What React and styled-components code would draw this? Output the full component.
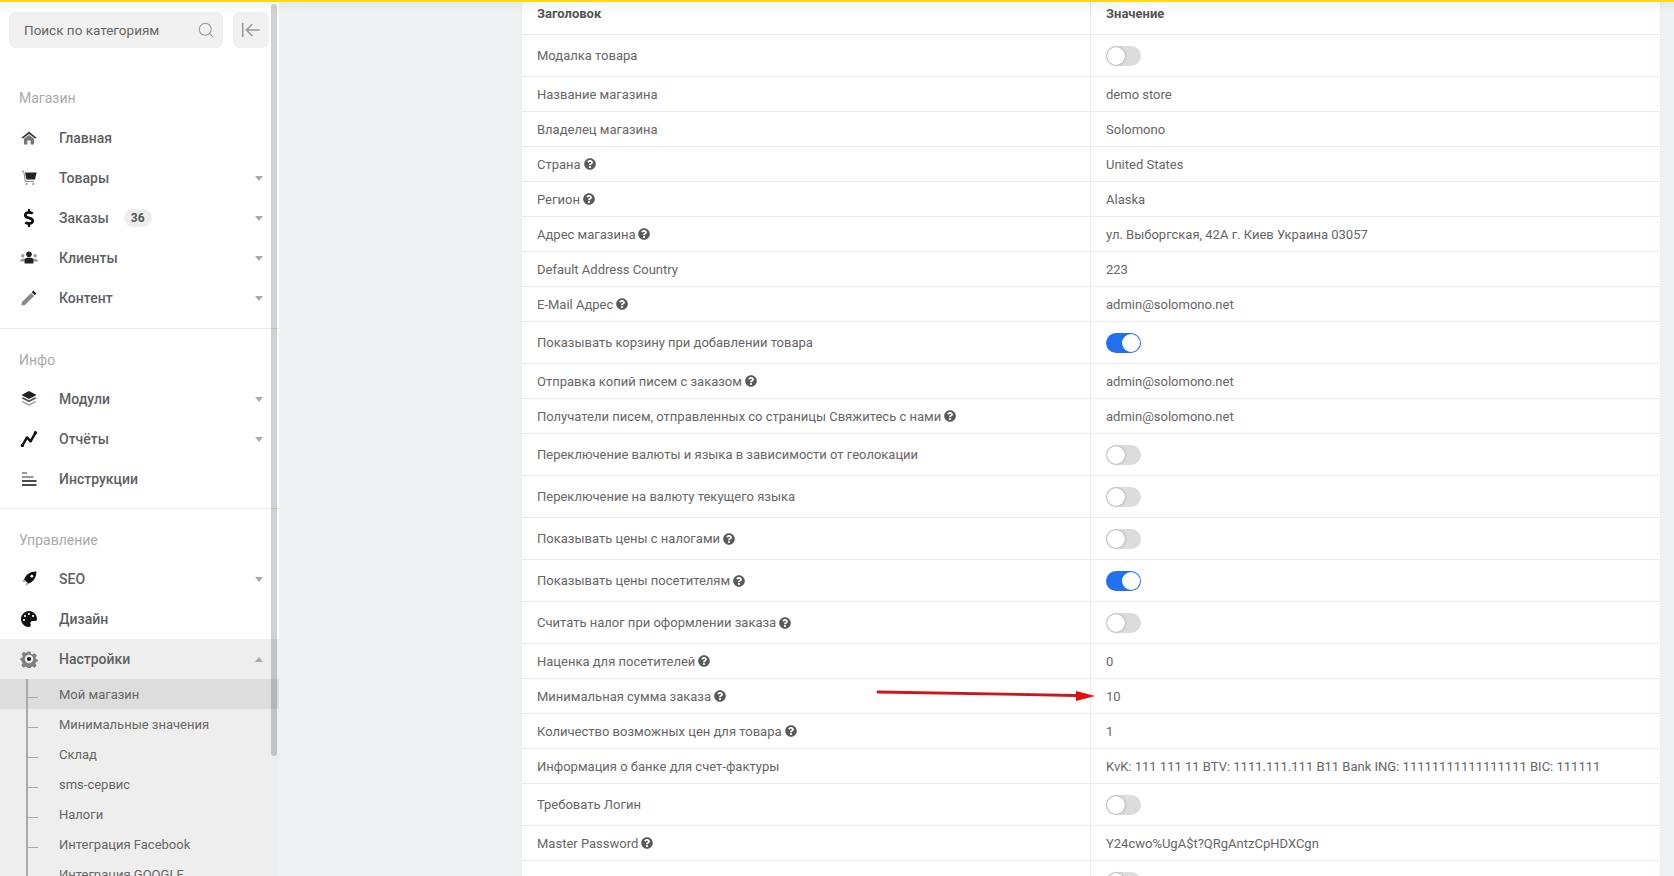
import React from 'react';
import styled, { createGlobalStyle } from 'styled-components';
import { Search, ArrowLeftToLine } from 'lucide-react';
import { FaDollarSign, FaPalette, FaQuestionCircle } from 'react-icons/fa';

const Global = createGlobalStyle`
  html, body { margin: 0; height: 876px; overflow: hidden; background: #eef2f2; }
  * { box-sizing: border-box; }
  body { font-family: Roboto, "Liberation Sans", sans-serif; color: #666; }
`;
const Page = styled.div`
  position: relative; display: flex; height: 876px; width: 1674px; overflow: hidden;
  border-top: 2px solid #fdd91e;
  &::after {
    content: ''; position: absolute; left: 0; right: 0; top: 0; height: 12px; pointer-events: none;
    background: linear-gradient(rgba(0,0,0,.035), rgba(0,0,0,0));
  }
`;
const Sidebar = styled.aside`
  position: relative; width: 279px; flex: none; height: 874px; background: #fff; overflow: hidden;
`;
const ScrollThumb = styled.div`
  position: absolute; left: 271px; top: 2px; width: 6px; height: 752px; border-radius: 3px; background: rgba(0,0,0,.18);
`;
const SearchRow = styled.div`
  display: flex; gap: 10px; padding: 10px 0 0 9px;
`;
const SearchBox = styled.div`
  width: 214px; height: 36px; border-radius: 6px; background: #f1f1f1; display: flex; align-items: center;
  justify-content: space-between; padding: 0 8px 0 15px; font-size: 13.5px; color: #666; font-weight: 400;
`;
const CollapseBtn = styled.div`
  width: 36px; height: 36px; border-radius: 6px; background: #f1f1f1; display: flex; align-items: center; justify-content: center;
`;
const Section = styled.section`
  padding-top: ${p => p.$top}px; padding-bottom: ${p => p.$bottom || 0}px;
  border-bottom: ${p => p.$line ? '1px solid #e9e9e9' : 'none'};
`;
const SectionTitle = styled.div`
  height: 20px; line-height: 20px; padding-left: 19px; margin-bottom: ${p => p.$gap}px; font-size: 14px; color: #aaa;
`;
const MenuItem = styled.div`
  height: 40px; display: flex; align-items: center; position: relative; padding-left: 59px;
  font-size: 14px; font-weight: 500; color: #5f5f64;
  background: ${p => p.$open ? '#eeeeee' : 'transparent'};
`;
const MenuIcon = styled.span`
  position: absolute; left: 19px; top: 0; height: 40px; width: 20px; display: flex; align-items: center; justify-content: center;
  color: ${p => p.$c || '#555'};
`;
const Badge = styled.span`
  margin-left: 15px; width: 28px; height: 18px; border-radius: 9px; background: #eee; color: #555; font-size: 12px; font-weight: 700;
  display: flex; align-items: center; justify-content: center;
`;
const Caret = styled.span`
  position: absolute; left: 255px; top: 18px; width: 0; height: 0; border-left: 4.5px solid transparent; border-right: 4.5px solid transparent;
  ${p => p.$up ? 'border-bottom: 5px solid #aaa;' : 'border-top: 5px solid #aaa;'}
`;
const SubList = styled.div`
  position: relative; background: #eeeeee;
  &::before { content: ''; position: absolute; left: 26px; top: 0; bottom: 0; width: 2px; background: #aaa; z-index: 1; }
`;
const SubItem = styled.div`
  height: 30px; display: flex; align-items: center; padding-left: 59px; position: relative; font-size: 13px; color: #666;
  background: ${p => p.$active ? '#dddddd' : 'transparent'};
  &::before { content: ''; position: absolute; left: 28px; top: 18px; width: 10px; height: 1px; background: #aaa; }
`;
const Main = styled.main`
  flex: 1; padding: 0 13px 0 242px; min-width: 0;
`;
const Table = styled.div`
  width: 1140px; background: #fff; border-left: 1px solid #e9eded; border-right: 1px solid #e9eded;
`;
const Row = styled.div`
  display: grid; grid-template-columns: 568px 1fr; height: ${p => p.$h}px; border-bottom: 1px solid #eaeaea;
  font-size: 13px; color: #666;
`;
const HeadRow = styled(Row)`
  font-weight: 700; color: #555;
`;
const Cell = styled.div`
  display: flex; align-items: center; padding-left: 15px; gap: 3px; min-width: 0;
`;
const ValueCell = styled(Cell)`
  box-shadow: -1px 0 0 #eaeaea; padding-left: 15px; margin-left: 1px;
`;
const HeadCell = styled(Cell)`
  align-items: flex-start; padding-top: 4px;
`;
const HeadValueCell = styled(ValueCell)`
  align-items: flex-start; padding-top: 4px;
`;
const Help = styled(FaQuestionCircle)`
  width: 12px; height: 12px; color: #5a5a5a; flex: none;
`;
const Toggle = styled.span`
  width: 35px; height: 20px; border-radius: 10px; position: relative; display: block;
  background: ${p => p.$on ? '#2170f0' : '#dcdcdc'};
  &::after {
    content: ''; position: absolute; top: 1px; width: 18px; height: 18px; border-radius: 50%; background: #fff;
    ${p => p.$on ? 'right: 1px;' : 'left: 1px; box-shadow: 0 0 2px rgba(0,0,0,.45);'}
  }
`;
const Arrow = styled.svg`
  position: absolute; left: 876px; top: 685px; width: 220px; height: 20px; overflow: visible;
`;

const Svg = ({ children, size = 18 }) => <svg width={size} height={size} viewBox="0 0 18 18">{children}</svg>;

const HomeIcon = () => (
  <Svg>
    <path d="M1.5 8.5 L9 2.6 L16.5 8.5 L15.2 9.7 L9 5 L2.8 9.7 Z" fill="#444" />
    <path d="M4 9.8 L9 6 L14 9.8 V15.4 H10.6 V11.5 H7.4 V15.4 H4 Z" fill="#777" />
  </Svg>
);
const CartIcon = () => (
  <Svg>
    <path d="M1.5 2 H3.6 L5.4 12.4 H14" fill="none" stroke="#888" strokeWidth="1" />
    <path d="M5 3.6 H16.6 L15 10.6 H6.4 Z" fill="#222" />
    <circle cx="6.5" cy="15" r="1.1" fill="#999" />
    <circle cx="13.2" cy="15" r="1.1" fill="#999" />
  </Svg>
);
const UsersIcon = () => (
  <Svg>
    <circle cx="2.8" cy="6.8" r="1.7" fill="#999" />
    <circle cx="15.2" cy="6.8" r="1.7" fill="#999" />
    <path d="M0 12.4 C0 9.2 5.6 9 5.6 10 V12.4 Z M18 12.4 C18 9.2 12.4 9 12.4 10 V12.4 Z" fill="#999" />
    <circle cx="9" cy="5.2" r="2.8" fill="#222" />
    <path d="M4.6 14.4 V11.6 C4.6 9.2 6.6 8.6 9 8.6 C11.4 8.6 13.4 9.2 13.4 11.6 V14.4 Z" fill="#222" />
  </Svg>
);
const PencilIcon = () => (
  <Svg>
    <path d="M2 13 L11 4 L14 7 L5 16 L1.4 16.6 Z" fill="#888" />
    <path d="M11.8 3.2 L13.4 1.6 L16.4 4.6 L14.8 6.2 Z" fill="#222" />
  </Svg>
);
const LayersIcon = () => (
  <Svg>
    <path d="M9 1 L16.6 5 L9 9 L1.4 5 Z" fill="#222" />
    <path d="M1.4 8.2 L3.2 7.2 L9 10.2 L14.8 7.2 L16.6 8.2 L9 12.2 Z" fill="#555" />
    <path d="M1.4 12 L3.2 11 L9 14 L14.8 11 L16.6 12 L9 16 Z" fill="#aaa" />
  </Svg>
);
const ChartIcon = () => (
  <Svg>
    <path d="M2.4 15.4 L7 7.4 L10.6 11.4 L15.4 2.8" fill="none" stroke="#111" strokeWidth="2.4" strokeLinejoin="round" strokeLinecap="round" />
    <circle cx="2.4" cy="15.4" r="1.7" fill="#111" />
    <circle cx="15.4" cy="2.8" r="1.7" fill="#111" />
  </Svg>
);
const LinesIcon = () => (
  <svg width="15" height="14" viewBox="0 0 15 14">
    <path d="M0 1h5M0 5h11.5" stroke="#333" strokeWidth="1.1" />
    <path d="M0 9h14.5M0 13h14.5" stroke="#111" strokeWidth="1.4" />
  </svg>
);
const RocketIcon = () => (
  <Svg>
    <path d="M1.6 11.6 L6.4 6.8 L11.4 11.2 L5.4 16.4 L6.6 12 Z" fill="#aaa" />
    <path d="M4.2 9.4 C5.8 4.6 10.4 1.4 16.4 1.6 C16.6 7.4 13.4 11.8 8.6 13.6 Z" fill="#111" />
    <circle cx="11.8" cy="6.2" r="1.4" fill="#fff" />
  </Svg>
);
const CogIcon = () => (
  <Svg>
    <path fillRule="evenodd" fill="#808080" d="M7.4 1.4h3.2l.5 2.3 1.5.7 2-1.2 2.2 2.4-1.3 1.9.4 1.5 2.1.8v1.4l-2.1.8-.5 1.5 1.3 1.9-2.2 2.3-2-1.2-1.4.6-.5 2.3H7.4l-.5-2.3-1.4-.6-2 1.2-2.2-2.3 1.3-1.9-.5-1.5L.3 9.7V8.3l2.1-.8.4-1.5-1.3-1.9 2.2-2.4 2 1.2 1.5-.7z" />
    <circle cx="9" cy="9" r="4.2" fill="#eee" />
    <circle cx="9" cy="9" r="2.1" fill="#222" />
  </Svg>
);

const shop = [
  ['Главная', <HomeIcon />, false],
  ['Товары', <CartIcon />, true],
  ['Заказы', <FaDollarSign size={18} />, true, '36', '#111'],
  ['Клиенты', <UsersIcon />, true],
  ['Контент', <PencilIcon />, true],
];
const info = [
  ['Модули', <LayersIcon />, true],
  ['Отчёты', <ChartIcon />, true],
  ['Инструкции', <LinesIcon />, false],
];
const manage = [
  ['SEO', <RocketIcon />, true],
  ['Дизайн', <FaPalette size={16} />, false, null, '#111'],
];
const subs = ['Мой магазин', 'Минимальные значения', 'Склад', 'sms-сервис', 'Налоги', 'Интеграция Facebook', 'Интеграция GOOGLE'];

const rows = [
  { l: 'Модалка товара', t: 0 },
  { l: 'Название магазина', v: 'demo store' },
  { l: 'Владелец магазина', v: 'Solomono' },
  { l: 'Страна', q: 1, v: 'United States' },
  { l: 'Регион', q: 1, v: 'Alaska' },
  { l: 'Адрес магазина', q: 1, v: 'ул. Выборгская, 42А г. Киев Украина 03057' },
  { l: 'Default Address Country', v: '223' },
  { l: 'E-Mail Адрес', q: 1, v: 'admin@solomono.net' },
  { l: 'Показывать корзину при добавлении товара', t: 1 },
  { l: 'Отправка копий писем с заказом', q: 1, v: 'admin@solomono.net' },
  { l: 'Получатели писем, отправленных со страницы Свяжитесь с нами', q: 1, v: 'admin@solomono.net' },
  { l: 'Переключение валюты и языка в зависимости от геолокации', t: 0 },
  { l: 'Переключение на валюту текущего языка', t: 0 },
  { l: 'Показывать цены с налогами', q: 1, t: 0 },
  { l: 'Показывать цены посетителям', q: 1, t: 1 },
  { l: 'Считать налог при оформлении заказа', q: 1, t: 0 },
  { l: 'Наценка для посетителей', q: 1, v: '0' },
  { l: 'Минимальная сумма заказа', q: 1, v: '10' },
  { l: 'Количество возможных цен для товара', q: 1, v: '1' },
  { l: 'Информация о банке для счет-фактуры', v: 'KvK: 111 111 11 BTV: 1111.111.111 B11 Bank ING: 11111111111111111 BIC: 111111' },
  { l: 'Требовать Логин', t: 0 },
  { l: 'Master Password', q: 1, v: 'Y24cwo%UgA$t?QRgAntzCpHDXCgn' },
  { l: '', t: 0 },
];

const Items = ({ list }) => list.map(([name, icon, caret, badge, color]) => (
  <MenuItem key={name}>
    <MenuIcon $c={color}>{icon}</MenuIcon>
    {name}
    {badge && <Badge>{badge}</Badge>}
    {caret && <Caret />}
  </MenuItem>
));

export default function App() {
  return (
    <Page>
      <Global />
      <Sidebar>
        <SearchRow>
          <SearchBox>Поиск по категориям <Search size={18} color="#999" strokeWidth={1.4} /></SearchBox>
          <CollapseBtn><ArrowLeftToLine size={22} color="#999" strokeWidth={1.7} /></CollapseBtn>
        </SearchRow>
        <Section $top={40} $bottom={10} $line>
          <SectionTitle $gap={10}>Магазин</SectionTitle>
          <Items list={shop} />
        </Section>
        <Section $top={21} $bottom={9} $line>
          <SectionTitle $gap={9}>Инфо</SectionTitle>
          <Items list={info} />
        </Section>
        <Section $top={21}>
          <SectionTitle $gap={9}>Управление</SectionTitle>
          <Items list={manage} />
          <MenuItem $open>
            <MenuIcon><CogIcon /></MenuIcon>Настройки<Caret $up />
          </MenuItem>
          <SubList>
            {subs.map((s, i) => <SubItem key={s} $active={i === 0}>{s}</SubItem>)}
          </SubList>
        </Section>
        <ScrollThumb />
      </Sidebar>
      <Main>
        <Table>
          <HeadRow $h={33}><HeadCell>Заголовок</HeadCell><HeadValueCell>Значение</HeadValueCell></HeadRow>
          {rows.map((r, i) => (
            <Row key={i} $h={r.t !== undefined ? 42 : 35}>
              <Cell>{r.l}{r.q && <Help />}</Cell>
              <ValueCell>{r.t !== undefined ? <Toggle $on={r.t === 1} /> : r.v}</ValueCell>
            </Row>
          ))}
        </Table>
      </Main>
      <Arrow viewBox="0 0 220 20">
        <path d="M2 5 L200 8.5" stroke="#d0141c" strokeWidth="2.8" strokeLinecap="round" fill="none" />
        <path d="M219 9 L200 4 L200 14 Z" fill="#e00f14" />
      </Arrow>
    </Page>
  );
}
